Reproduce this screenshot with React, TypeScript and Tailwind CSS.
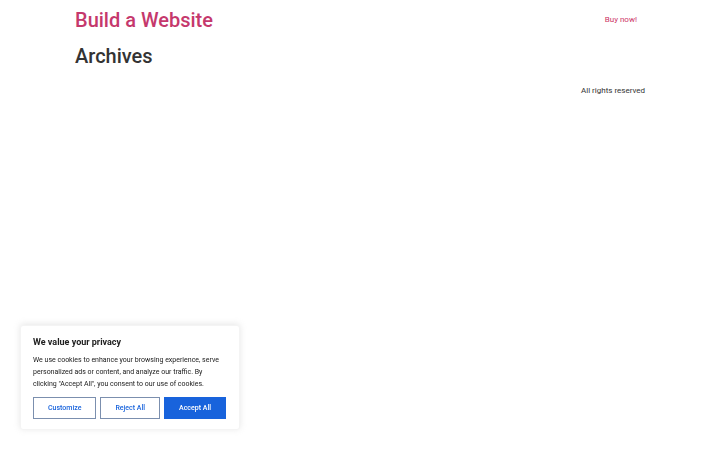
import React from 'react';

const App: React.FC = () => {
  return (
    <div className="min-h-[450px] bg-white text-[#333333] font-['Roboto',_'Liberation_Sans',_sans-serif]">
      <header className="mx-auto flex w-[570px] items-center justify-between py-[8px]">
        <h1 className="text-[20px] leading-[24px] font-medium text-[#c5386c]">Build a Website</h1>
        <nav className="flex pr-[8px] text-[8px] leading-[12px]">
          <a className="block text-[#cc3366]">Buy now!</a>
        </nav>
      </header>
      <main className="mx-auto w-[570px] pt-[4px]">
        <h1 className="text-[20px] leading-[24px] font-medium text-[#333333]">Archives</h1>
      </main>
      <footer className="mx-auto flex w-[570px] justify-end pt-[17px]">
        <p className="text-[8px] leading-[12px] text-[#333333]">All rights reserved</p>
      </footer>

      <div className="fixed bottom-[20px] left-[20px] w-[220px] rounded-[3px] border border-[#f4f4f4] bg-white px-[12px] pt-[10px] pb-[10px] shadow-[0_-1px_6px_0_rgba(172,171,171,0.3)]">
        <p className="text-[9px] leading-[12px] font-bold text-[#212121]">We value your privacy</p>
        <p className="mt-[6px] text-[7px] leading-[12px] text-[#212121]">
          We use cookies to enhance your browsing experience, serve personalized ads or content, and analyze our traffic. By clicking "Accept All", you consent to our use of cookies.
        </p>
        <div className="mt-[7px] mr-[1px] flex gap-[4px]">
          <button className="h-[22px] flex-auto border border-[#7b8fae] px-[13px] text-[7px] font-medium text-[#1863dc]">Customize</button>
          <button className="h-[22px] flex-auto border border-[#7b8fae] px-[13px] text-[7px] font-medium text-[#1863dc]">Reject All</button>
          <button className="h-[22px] flex-auto border border-[#1863dc] bg-[#1863dc] px-[13px] text-[7px] font-medium text-white">Accept All</button>
        </div>
      </div>
    </div>
  );
};

export default App;
